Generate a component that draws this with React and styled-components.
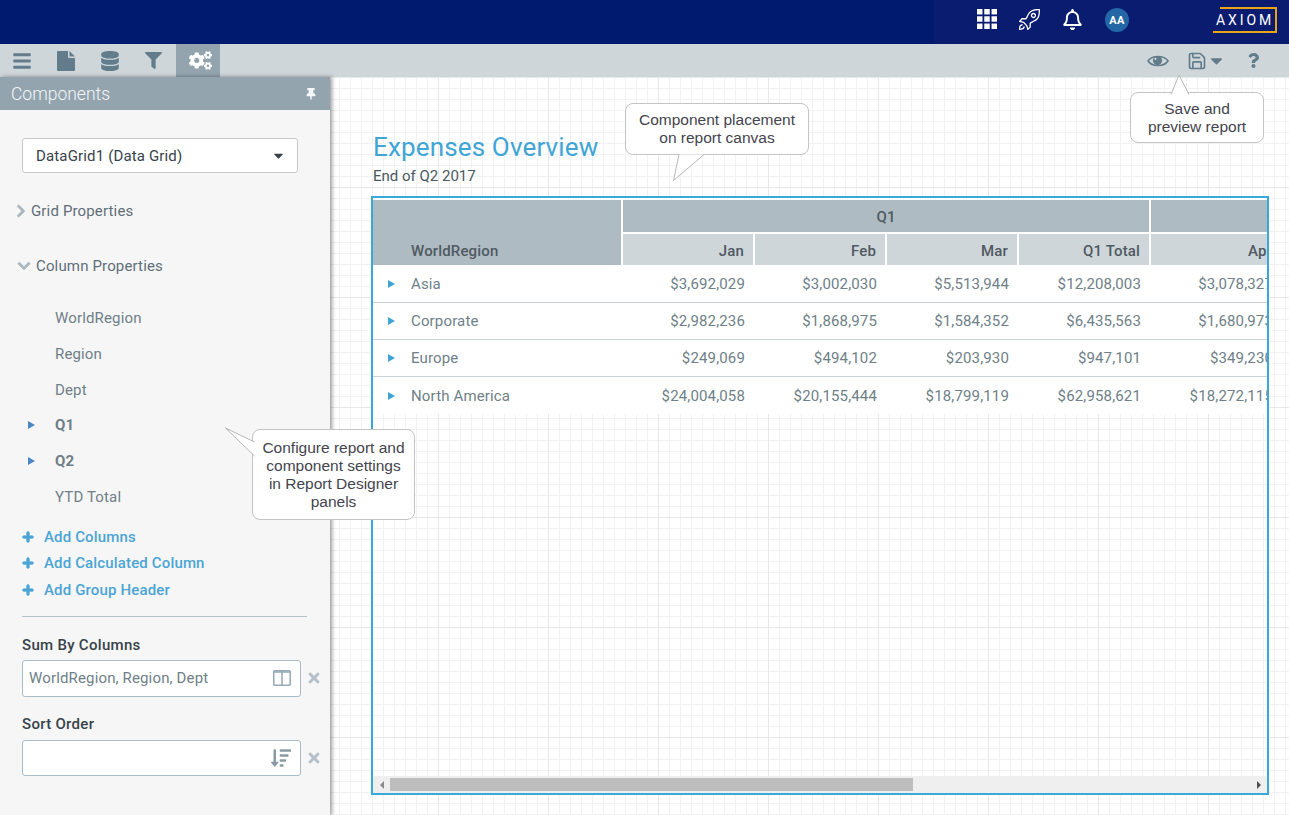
import React from "react";
import styled, { createGlobalStyle } from "styled-components";
import {
  FaBars,
  FaDatabase,
  FaFilter,
  FaCogs,
  FaThumbtack,
  FaRegBell,
  FaCaretDown,
  FaQuestion,
  FaPlus,
  FaTimes,
  FaChevronRight,
  FaChevronDown,
  FaSortAmountDown,
} from "react-icons/fa";
import { SlRocket } from "react-icons/sl";
import { Save } from "lucide-react";

const GlobalStyle = createGlobalStyle`
  html, body {
    margin: 0;
    padding: 0;
    height: 100%;
    overflow: hidden;
    background: #fff;
    font-family: Roboto, "Liberation Sans", sans-serif;
  }
  * {
    box-sizing: border-box;
  }
`;

const columnNames = ["WorldRegion", "Region", "Dept"];

const rows = [
  { name: "Asia", values: ["$3,692,029", "$3,002,030", "$5,513,944", "$12,208,003", "$3,078,327"] },
  { name: "Corporate", values: ["$2,982,236", "$1,868,975", "$1,584,352", "$6,435,563", "$1,680,973"] },
  { name: "Europe", values: ["$249,069", "$494,102", "$203,930", "$947,101", "$349,230"] },
  { name: "North America", values: ["$24,004,058", "$20,155,444", "$18,799,119", "$62,958,621", "$18,272,115"] },
];

const Triangle = ({ color }) => (
  <TriangleIcon viewBox="0 0 7 8" $color={color}>
    <path d="M0 0 L7 4 L0 8z" />
  </TriangleIcon>
);

const App = () => {
  return (
    <Shell>
      <GlobalStyle />
      <TopBar>
        <TopTools>
          <AppsIcon viewBox="0 0 22 22">
            {[0, 8, 16].map((y) =>
              [0, 8, 16].map((x) => <rect key={`${x}-${y}`} x={x} y={y} width="6" height="6" fill="#fff" />)
            )}
          </AppsIcon>
          <TopIcon><SlRocket size={21} /></TopIcon>
          <TopIcon><FaRegBell size={21} /></TopIcon>
          <Avatar>AA</Avatar>
          <Logo>AXIOM</Logo>
        </TopTools>
      </TopBar>

      <Toolbar>
        <ToolTab><FaBars size={20} /></ToolTab>
        <ToolTab>
          <svg width="18" height="20" viewBox="0 0 18 20" fill="currentColor">
            <path d="M1 0H11V6a1 1 0 0 0 1 1H18V19a1 1 0 0 1-1 1H1a1 1 0 0 1-1-1V1a1 1 0 0 1 1-1z" />
            <path d="M12.5 0L18 5.5H12.5z" />
          </svg>
        </ToolTab>
        <ToolTab><FaDatabase size={20} /></ToolTab>
        <ToolTab $nudge={-2}><FaFilter size={17} /></ToolTab>
        <ToolTab $active $nudge={4}><FaCogs size={23} /></ToolTab>
        <ToolSpacer />
        <ToolAction $width={40}>
          <svg width="22" height="14" viewBox="0 0 22 14">
            <path d="M1 7C5 1 17 1 21 7C17 13 5 13 1 7z" fill="none" stroke="currentColor" strokeWidth="1.6" />
            <circle cx="10.5" cy="6.5" r="4.6" fill="currentColor" />
            <circle cx="8.4" cy="4.8" r="1.1" fill="#cfd6da" />
          </svg>
        </ToolAction>
        <ToolAction $width={45} $gap={6}>
          <Save size={20} strokeWidth={2} />
          <FaCaretDown size={19} />
        </ToolAction>
        <ToolAction $width={48}><FaQuestion size={15} /></ToolAction>
      </Toolbar>

      <Main>
        <Panel>
          <PanelHeader>
            <span>Components</span>
            <FaThumbtack size={12} />
          </PanelHeader>

          <PanelBody>
            <Select>
              DataGrid1 (Data Grid)
              <FaCaretDown size={15} />
            </Select>

            <SectionRow $top={29} $left={-7.6} $gap={2.6}>
              <FaChevronRight size={14} />
              Grid Properties
            </SectionRow>
            <SectionRow $top={37} $left={-5} $gap={5}>
              <FaChevronDown size={14} />
              Column Properties
            </SectionRow>

            <ColumnList>
              {columnNames.map((name) => (
                <ColumnItem key={name}>{name}</ColumnItem>
              ))}
              <ColumnItem $bold>
                <Triangle color="#4a86c8" />
                Q1
              </ColumnItem>
              <ColumnItem $bold>
                <Triangle color="#4a86c8" />
                Q2
              </ColumnItem>
              <ColumnItem>YTD Total</ColumnItem>
            </ColumnList>

            <AddList>
              <AddLink><FaPlus size={12} />Add Columns</AddLink>
              <AddLink><FaPlus size={12} />Add Calculated Column</AddLink>
              <AddLink><FaPlus size={12} />Add Group Header</AddLink>
            </AddList>

            <Divider />

            <FieldLabel $top={19}>Sum By Columns</FieldLabel>
            <FieldRow $top={6}>
              <FieldInput $height={37}>
                WorldRegion, Region, Dept
                <ColumnsIcon viewBox="0 0 18 16">
                  <rect x="0.75" y="0.75" width="16.5" height="14.5" rx="1" fill="none" stroke="#93a9b8" strokeWidth="1.5" />
                  <path d="M9 1v14M1 2h16" stroke="#93a9b8" strokeWidth="1.5" fill="none" />
                </ColumnsIcon>
              </FieldInput>
              <ClearIcon><FaTimes size={16} /></ClearIcon>
            </FieldRow>

            <FieldLabel $top={18}>Sort Order</FieldLabel>
            <FieldRow $top={7}>
              <FieldInput $height={36}>
                <span />
                <SortIcon><FaSortAmountDown size={20} /></SortIcon>
              </FieldInput>
              <ClearIcon><FaTimes size={16} /></ClearIcon>
            </FieldRow>
          </PanelBody>
        </Panel>

        <Canvas>
          <ReportTitle>Expenses Overview</ReportTitle>
          <ReportSubtitle>End of Q2 2017</ReportSubtitle>
          <GridFrame>
            <TableClip>
              <DataTable>
                <colgroup>
                  <col style={{ width: 248 }} />
                  <col style={{ width: 132 }} />
                  <col style={{ width: 132 }} />
                  <col style={{ width: 132 }} />
                  <col style={{ width: 132 }} />
                  <col style={{ width: 132 }} />
                </colgroup>
                <thead>
                  <tr>
                    <CornerCell rowSpan={2}>WorldRegion</CornerCell>
                    <GroupCell colSpan={4}>Q1</GroupCell>
                    <GroupCell />
                  </tr>
                  <tr>
                    {["Jan", "Feb", "Mar", "Q1 Total", "Apr"].map((month) => (
                      <MonthCell key={month}>{month}</MonthCell>
                    ))}
                  </tr>
                </thead>
                <tbody>
                  {rows.map((row) => (
                    <tr key={row.name}>
                      <NameCell>
                        <NameInner>
                          <Triangle color="#3fa5d6" />
                          {row.name}
                        </NameInner>
                      </NameCell>
                      {row.values.map((value, index) => (
                        <ValueCell key={index}>{value}</ValueCell>
                      ))}
                    </tr>
                  ))}
                </tbody>
              </DataTable>
            </TableClip>
            <ScrollBar>
              <ScrollArrow $dir="left" />
              <ScrollTrack>
                <ScrollThumb />
              </ScrollTrack>
              <ScrollArrow $dir="right" />
            </ScrollBar>
          </GridFrame>
        </Canvas>
      </Main>

      <Callout $left={625} $top={103} $width={184} $height={52}>
        Component placement
        <br />
        on report canvas
        <Tail $left={46} $top={50} width="36" height="28" viewBox="0 0 36 28">
          <path d="M7 0.5 L1.5 26.5 L32 0.5" fill="#fff" stroke="#b5b5b5" strokeWidth="1" />
        </Tail>
      </Callout>

      <Callout $left={1130} $top={92} $width={134} $height={51}>
        Save and
        <br />
        preview report
        <Tail $left={38} $top={-19} width="24" height="21" viewBox="0 0 24 21">
          <path d="M2 20.5 L10 1 L20 20.5" fill="#fff" stroke="#b5b5b5" strokeWidth="1" />
        </Tail>
      </Callout>

      <Callout $left={252} $top={429} $width={163} $height={91}>
        Configure report and
        <br />
        component settings
        <br />
        in Report Designer
        <br />
        panels
        <Tail $left={-29} $top={-3} width="31" height="32" viewBox="0 0 31 32">
          <path d="M30.5 15 L1.5 1 L30.5 29" fill="#fff" stroke="#b5b5b5" strokeWidth="1" />
        </Tail>
      </Callout>
    </Shell>
  );
};

const Shell = styled.div`
  position: relative;
  display: flex;
  flex-direction: column;
  width: 100%;
  height: 100vh;
  overflow: hidden;
`;

const TriangleIcon = styled.svg`
  flex: none;
  width: 7px;
  height: 8px;
  fill: ${(props) => props.$color};
`;

const TopBar = styled.header`
  display: flex;
  justify-content: flex-end;
  flex: 0 0 44px;
  background: #001a70;
`;

const TopTools = styled.div`
  display: flex;
  align-items: center;
  width: 355px;
  padding-left: 43px;
  background: #0a1c70;
`;

const AppsIcon = styled.svg`
  width: 20px;
  height: 20px;
  margin-right: 22px;
  margin-top: -6px;
`;

const TopIcon = styled.span`
  display: flex;
  color: #fff;
  margin-right: 22px;
  margin-top: -6px;
`;

const Avatar = styled.span`
  display: flex;
  align-items: center;
  justify-content: center;
  width: 24px;
  height: 24px;
  border-radius: 50%;
  background: #2467a6;
  color: #fff;
  font-size: 11px;
  font-weight: 700;
  letter-spacing: 0.4px;
  margin-top: -4px;
`;

const Logo = styled.div`
  position: relative;
  margin-left: 84px;
  margin-top: -4px;
  width: 64px;
  height: 26px;
  padding-left: 3px;
  color: #fff;
  font-size: 14px;
  line-height: 26px;
  letter-spacing: 2.9px;
  white-space: nowrap;

  &::before {
    content: "";
    position: absolute;
    left: 7px;
    right: 0;
    top: 0;
    bottom: 0;
    border-top: 2px solid #e8a317;
    border-right: 2px solid #e8a317;
  }

  &::after {
    content: "";
    position: absolute;
    left: 0;
    right: 0;
    bottom: 0;
    border-bottom: 2px solid #e8a317;
  }
`;

const Toolbar = styled.div`
  display: flex;
  flex: 0 0 33px;
  padding-right: 12px;
  background: #cfd6da;
`;

const ToolTab = styled.div`
  display: flex;
  align-items: center;
  justify-content: center;
  width: 44px;
  padding-left: ${(props) => (props.$nudge > 0 ? props.$nudge : 0)}px;
  padding-right: ${(props) => (props.$nudge < 0 ? -props.$nudge : 0)}px;
  color: ${(props) => (props.$active ? "#fff" : "#627c8c")};
  background: ${(props) => (props.$active ? "#93a4af" : "transparent")};
`;

const ToolSpacer = styled.div`
  flex: 1;
`;

const ToolAction = styled.div`
  display: flex;
  align-items: center;
  justify-content: center;
  width: ${(props) => props.$width}px;
  margin-left: ${(props) => props.$gap || 0}px;
  color: #627c8c;
`;

const Main = styled.div`
  display: flex;
  flex: 1;
  min-height: 0;
`;

const Panel = styled.aside`
  position: relative;
  z-index: 1;
  display: flex;
  flex-direction: column;
  flex: 0 0 330px;
  min-width: 0;
  background: #f6f6f6;
  box-shadow: 2px 0 4px rgba(0, 0, 0, 0.4);
`;

const PanelHeader = styled.div`
  display: flex;
  align-items: center;
  justify-content: space-between;
  flex: 0 0 33px;
  padding: 0 13px 0 11px;
  background: #93a4af;
  color: #f4f7f8;
  font-size: 17.5px;
  font-weight: 300;
`;

const PanelBody = styled.div`
  display: flex;
  flex-direction: column;
  padding: 28px 0 0 22px;
  font-size: 15px;
  letter-spacing: 0.15px;
`;

const Select = styled.div`
  display: flex;
  align-items: center;
  justify-content: space-between;
  width: 276px;
  height: 35px;
  padding: 0 11px 0 13px;
  background: #fff;
  border: 1px solid #c8c8c8;
  border-radius: 3px;
  color: #37424a;
`;

const SectionRow = styled.div`
  display: flex;
  align-items: center;
  gap: ${(props) => props.$gap}px;
  height: 18px;
  margin: ${(props) => props.$top}px 0 0 ${(props) => props.$left}px;
  color: #5f6f79;

  svg {
    color: #aab7bf;
    stroke: currentColor;
    stroke-width: 30;
  }
`;

const ColumnList = styled.div`
  display: flex;
  flex-direction: column;
  margin-top: 26px;
`;

const ColumnItem = styled.div`
  position: relative;
  height: 35.8px;
  line-height: 35.8px;
  padding-left: 33px;
  color: #6f7f88;
  font-weight: ${(props) => (props.$bold ? 700 : 400)};

  svg {
    position: absolute;
    left: 6px;
    top: 13px;
  }
`;

const AddList = styled.div`
  display: flex;
  flex-direction: column;
  gap: 8.5px;
  margin-top: 12px;
`;

const AddLink = styled.div`
  display: flex;
  align-items: center;
  gap: 10px;
  height: 18px;
  color: #4aa5d5;
  font-weight: 500;

  svg {
    stroke: currentColor;
    stroke-width: 40;
  }
`;

const Divider = styled.hr`
  width: 285px;
  margin: 17px 0 0;
  border: 0;
  border-top: 1px solid #b4c2ca;
`;

const FieldLabel = styled.div`
  height: 18px;
  margin-top: ${(props) => props.$top}px;
  color: #37424a;
  font-weight: 500;
  letter-spacing: 0.3px;
`;

const FieldRow = styled.div`
  display: flex;
  align-items: center;
  margin-top: ${(props) => props.$top}px;
`;

const FieldInput = styled.div`
  display: flex;
  align-items: center;
  justify-content: space-between;
  width: 279px;
  height: ${(props) => props.$height}px;
  padding: 0 9px 0 6px;
  background: #fff;
  border: 1px solid #a9bcc7;
  border-radius: 3px;
  color: #6f7f88;
`;

const ColumnsIcon = styled.svg`
  width: 18px;
  height: 16px;
`;

const SortIcon = styled.span`
  display: flex;
  color: #8a9aa4;
`;

const ClearIcon = styled.span`
  display: flex;
  margin-left: 5px;
  color: #b4c0c8;
`;

const Canvas = styled.main`
  flex: 1;
  min-width: 0;
  padding: 55px 20px 20px 43px;
  background-color: #fff;
  background-image:
    linear-gradient(to right, #e8e8e8 1px, transparent 1px),
    linear-gradient(to bottom, #e8e8e8 1px, transparent 1px),
    linear-gradient(to right, #f2f2f2 1px, transparent 1px),
    linear-gradient(to bottom, #f2f2f2 1px, transparent 1px);
  background-size: 110px 110px, 110px 110px, 11px 11px, 11px 11px;
  background-position: 108px 0, 0 0, 9px 0, 0 0;
`;

const ReportTitle = styled.h1`
  margin: 0;
  height: 30px;
  color: #3fa5d6;
  font-size: 26px;
  font-weight: 400;
  line-height: 30px;
  letter-spacing: 0.15px;
`;

const ReportSubtitle = styled.div`
  margin-top: 5px;
  height: 18px;
  color: #4a5860;
  font-size: 15px;
  line-height: 18px;
`;

const GridFrame = styled.section`
  display: flex;
  flex-direction: column;
  width: 898px;
  height: 599px;
  margin: 11px 0 0 -2px;
  border: 2px solid #38a9d9;
`;

const TableClip = styled.div`
  flex: 1;
  min-height: 0;
  overflow: hidden;
`;

const DataTable = styled.table`
  table-layout: fixed;
  width: 908px;
  border-collapse: separate;
  border-spacing: 0;
  background: #fff;
  padding-top: 2px;
  font-size: 15px;
  letter-spacing: 0.15px;
`;

const CornerCell = styled.th`
  height: 65px;
  padding: 0 0 5px 38px;
  background: #afbbc3;
  color: #4f5a62;
  font-weight: 500;
  text-align: left;
  vertical-align: bottom;
`;

const GroupCell = styled.th`
  height: 32px;
  padding: 2px 0 0;
  background: #afbbc3;
  border-left: 2px solid #fff;
  color: #4f5a62;
  font-weight: 500;
  text-align: center;
`;

const MonthCell = styled.th`
  height: 33px;
  padding: 2px 9px 0 0;
  background: #cfd6da;
  border-left: 2px solid #fff;
  border-top: 2px solid #fff;
  color: #4f5a62;
  font-weight: 500;
  text-align: right;
`;

const NameCell = styled.td`
  height: 37px;
  padding: 0 0 0 15px;
  border-bottom: 1px solid #ccd3d8;
  color: #6f7f88;

  tr:first-child & {
    height: 38px;
    padding-top: 1px;
  }

  tr:last-child & {
    border-bottom: 0;
  }
`;

const NameInner = styled.span`
  display: flex;
  align-items: center;
  gap: 16px;
`;

const ValueCell = styled.td`
  height: 37px;
  padding: 0 8px 0 0;
  border-bottom: 1px solid #ccd3d8;
  color: #6f7f88;
  text-align: right;
  white-space: nowrap;

  tr:first-child & {
    height: 38px;
    padding-top: 1px;
  }

  tr:last-child & {
    border-bottom: 0;
  }
`;

const ScrollBar = styled.div`
  display: flex;
  align-items: center;
  flex: 0 0 17px;
  background: #efefef;
`;

const ScrollArrow = styled.span`
  flex: 0 0 17px;
  display: flex;
  justify-content: center;

  &::before {
    content: "";
    border-top: 4px solid transparent;
    border-bottom: 4px solid transparent;
    border-right: ${(props) => (props.$dir === "left" ? "4px solid #8a8a8a" : "0")};
    border-left: ${(props) => (props.$dir === "right" ? "4px solid #505050" : "0")};
  }
`;

const ScrollTrack = styled.div`
  flex: 1;
  height: 13px;
`;

const ScrollThumb = styled.div`
  width: 523px;
  height: 100%;
  background: #bdbdbd;
`;

const Callout = styled.div`
  position: absolute;
  z-index: 2;
  left: ${(props) => props.$left}px;
  top: ${(props) => props.$top}px;
  width: ${(props) => props.$width}px;
  height: ${(props) => props.$height}px;
  display: flex;
  flex-direction: column;
  justify-content: center;
  background: #fff;
  border: 1.5px solid #c4c4c4;
  border-radius: 8px;
  color: #44444e;
  font-family: "Liberation Sans", Arial, sans-serif;
  font-size: 15.5px;
  line-height: 18px;
  text-align: center;
`;

const Tail = styled.svg`
  position: absolute;
  left: ${(props) => props.$left}px;
  top: ${(props) => props.$top}px;
`;

export default App;
